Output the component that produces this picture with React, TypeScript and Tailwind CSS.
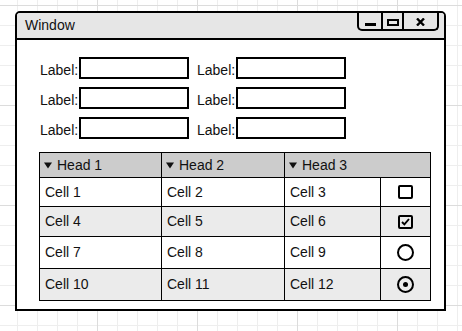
const rows = [
  { cells: ["Cell 1", "Cell 2", "Cell 3"], control: "box", height: "h-[29px]", bg: "bg-white" },
  { cells: ["Cell 4", "Cell 5", "Cell 6"], control: "boxChecked", height: "h-[30px]", bg: "bg-[#ebebeb]" },
  { cells: ["Cell 7", "Cell 8", "Cell 9"], control: "radio", height: "h-[32px]", bg: "bg-white" },
  { cells: ["Cell 10", "Cell 11", "Cell 12"], control: "radioChecked", height: "h-[32px]", bg: "bg-[#ebebeb]" },
];

const Caret = () => (
  <svg width="8" height="7" viewBox="0 0 8 7" className="mr-[5px] shrink-0">
    <path d="M0 0.5 H8 L4 6.5 Z" fill="#111" />
  </svg>
);

const Control = ({ kind }: { kind: string }) => {
  if (kind === "box" || kind === "boxChecked") {
    return (
      <div className="flex h-[14px] w-[15px] items-center justify-center rounded-[2px] border-2 border-black">
        {kind === "boxChecked" && (
          <svg width="9" height="8" viewBox="0 0 9 8">
            <path d="M1 4 L3.4 6.4 L8 1" fill="none" stroke="#000" strokeWidth="1.9" />
          </svg>
        )}
      </div>
    );
  }
  return (
    <div className="flex h-[17px] w-[17px] items-center justify-center rounded-full border-2 border-black">
      {kind === "radioChecked" && <div className="h-[5px] w-[5px] rounded-full bg-black" />}
    </div>
  );
};

const Field = ({ first }: { first?: boolean }) => (
  <div className={first ? "flex items-center" : "ml-[8px] flex items-center"}>
    <span className="mt-[4px] w-[39px] leading-[15px]">Label:</span>
    <div className="h-[22px] w-[110px] border-2 border-black bg-white" />
  </div>
);

const App = () => {
  return (
    <div className="h-[331px] w-[462px] overflow-hidden bg-white bg-[linear-gradient(to_right,#dcdcdc_1px,transparent_1px),linear-gradient(to_bottom,#dcdcdc_1px,transparent_1px),linear-gradient(to_right,#eeeeee_1px,transparent_1px),linear-gradient(to_bottom,#eeeeee_1px,transparent_1px)] bg-[size:100px_100px,100px_100px,20px_20px,20px_20px] bg-[position:97px_0,0_5px,17px_0,0_5px] pl-[15px] pt-[11px] font-['Liberation_Sans',Arial,sans-serif] text-[14px] text-[#111]">
      <div className="flex h-[300px] w-[431px] flex-col overflow-hidden rounded-t-[5px] border-2 border-black bg-white">
        {/* title bar */}
        <div className="flex h-[27px] shrink-0 items-start justify-between border-b-2 border-black bg-[#e6e6e6]">
          <span className="pl-[8px] pt-[4px] leading-[17px]">Window</span>
          <div className="mr-[5px] flex h-[18px] rounded-b-[5px] border-2 border-t-0 border-black">
            <div className="flex w-[22px] items-end justify-center pb-[3px]">
              <div className="h-[3px] w-[11px] bg-black" />
            </div>
            <div className="flex w-[21px] items-end justify-center border-l-2 border-black pb-[3px]">
              <div className="h-[7px] w-[12px] border-2 border-black" />
            </div>
            <div className="flex w-[35px] items-end justify-center border-l-2 border-black pb-[3px]">
              <svg width="9" height="8" viewBox="0 0 9 8">
                <path d="M1 0.5 L8 7.5 M8 0.5 L1 7.5" stroke="#000" strokeWidth="2.4" />
              </svg>
            </div>
          </div>
        </div>

        {/* form */}
        <div className="flex flex-col gap-2 pl-[23px] pt-[17px]">
          {[0, 1, 2].map((i) => (
            <div key={i} className="flex">
              <Field first />
              <Field />
            </div>
          ))}
        </div>

        {/* table */}
        <div className="ml-[22px] mt-[13px] w-[392px] border border-black">
          <div className="grid h-[24px] grid-cols-[121px_123px_1fr] bg-[#cccccc]">
            {["Head 1", "Head 2", "Head 3"].map((h, i) => (
              <div key={h} className={i === 0 ? "flex items-center pl-[4px]" : "flex items-center border-l border-black pl-[4px]"}>
                <Caret />
                {h}
              </div>
            ))}
          </div>
          {rows.map((r) => (
            <div key={r.cells[0]} className={`grid grid-cols-[121px_123px_96px_1fr] border-t border-black ${r.height} ${r.bg}`}>
              {r.cells.map((c, i) => (
                <div key={c} className={i === 0 ? "flex items-center pl-[5px]" : "flex items-center border-l border-black pl-[5px]"}>
                  {c}
                </div>
              ))}
              <div className="flex items-center justify-center border-l border-black">
                <Control kind={r.control} />
              </div>
            </div>
          ))}
        </div>
      </div>
    </div>
  );
};

export default App;
